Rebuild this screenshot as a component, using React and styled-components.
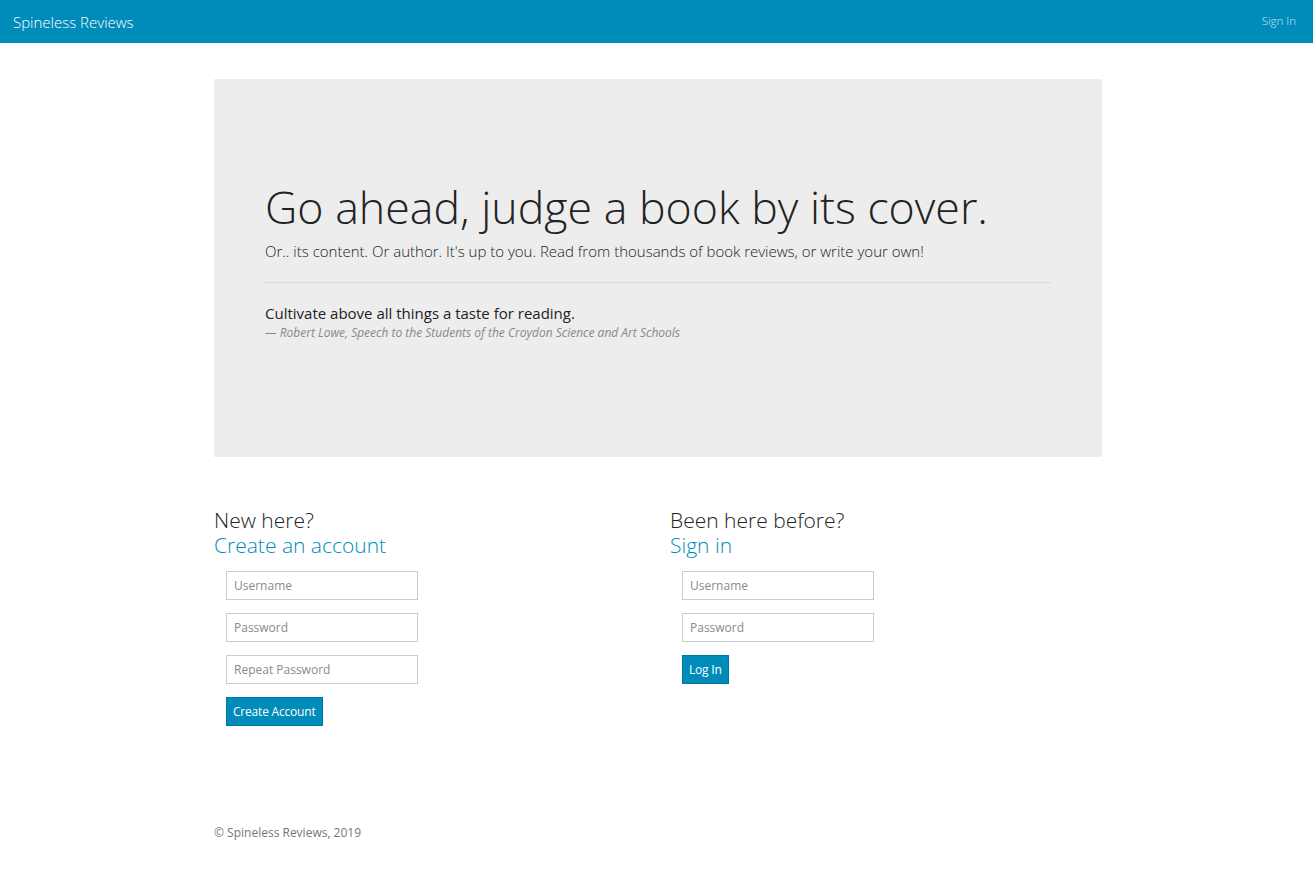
import React from 'react';
import styled, { createGlobalStyle } from 'styled-components';

const GlobalStyle = createGlobalStyle`
  html, body {
    margin: 0;
    padding: 0;
    background: #fff;
  }
  body {
    font-family: "Open Sans", "Noto Sans", "Liberation Sans", sans-serif;
    color: #222;
  }
  * {
    box-sizing: border-box;
  }
`;

const Navbar = styled.nav`
  height: 43px;
  background: #008cba;
  display: flex;
  align-items: center;
  justify-content: space-between;
  padding: 0 17px 0 13px;
`;

const Brand = styled.a`
  color: #fff;
  font-size: 15px;
  font-weight: 300;
  text-decoration: none;
  margin-top: 1px;
`;

const NavLink = styled.a`
  color: rgba(255, 255, 255, 0.8);
  font-size: 11.5px;
  font-weight: 300;
  text-decoration: none;
  margin-top: -2px;
`;

const Container = styled.main`
  width: 888px;
  margin-left: calc(50% - 442.5px);
  padding-top: 36px;
`;

const Jumbotron = styled.section`
  background: #ededed;
  height: 378px;
  padding: 103px 51px 0;
`;

const Title = styled.h1`
  margin: 0;
  font-size: 44.7px;
  font-weight: 300;
  line-height: 1.1;
  color: #222;
`;

const Lead = styled.p`
  margin: 10px 0 0;
  font-size: 15px;
  font-weight: 300;
  line-height: 1.4;
  color: #222;
`;

const Rule = styled.hr`
  border: 0;
  border-top: 1px solid #dadada;
  margin: 20px 0 20px;
`;

const Quote = styled.blockquote`
  margin: 0;
  padding: 0;
`;

const QuoteText = styled.p`
  margin: 0;
  font-size: 15px;
  line-height: 1.4;
  color: #222;
`;

const Cite = styled.footer`
  margin-top: 1px;
  font-size: 12px;
  font-style: italic;
  line-height: 1.4;
  color: #888;
`;

const Columns = styled.div`
  display: grid;
  grid-template-columns: 456px 1fr;
  padding-top: 51px;
`;

const Panel = styled.div`
  display: flex;
  flex-direction: column;
`;

const PanelTitle = styled.h3`
  margin: 0 0 13px;
  font-size: 21px;
  font-weight: 300;
  line-height: 1.2;
  color: #222;
`;

const Accent = styled.span`
  display: block;
  color: #008cba;
`;

const Form = styled.form`
  display: flex;
  flex-direction: column;
  align-items: flex-start;
  gap: 13px;
  padding-left: 12px;
`;

const Input = styled.input`
  width: 192px;
  height: 29px;
  border: 1px solid #ccc;
  border-radius: 0;
  padding: 0 7px;
  font-family: inherit;
  font-size: 12px;
  color: #222;
  outline: none;

  &::placeholder {
    color: #8a8a8a;
  }
`;

const Button = styled.button`
  height: 29px;
  padding: 0 6px;
  background: #008cba;
  border: 1px solid #0079a1;
  border-radius: 0;
  color: #fff;
  font-family: inherit;
  font-size: 12px;
  letter-spacing: -0.2px;
  cursor: pointer;
`;

const Footer = styled.footer`
  padding-top: 99px;
  font-size: 12px;
  line-height: 1.4;
  color: #777;
`;

const App = () => {
  return (
    <>
      <GlobalStyle />
      <Navbar>
        <Brand href="#">Spineless Reviews</Brand>
        <NavLink href="#">Sign In</NavLink>
      </Navbar>
      <Container>
        <Jumbotron>
          <Title>Go ahead, judge a book by its cover.</Title>
          <Lead>Or.. its content. Or author. It's up to you. Read from thousands of book reviews, or write your own!</Lead>
          <Rule />
          <Quote>
            <QuoteText>Cultivate above all things a taste for reading.</QuoteText>
            <Cite>— Robert Lowe, Speech to the Students of the Croydon Science and Art Schools</Cite>
          </Quote>
        </Jumbotron>
        <Columns>
          <Panel>
            <PanelTitle>
              New here?
              <Accent>Create an account</Accent>
            </PanelTitle>
            <Form onSubmit={(e) => e.preventDefault()}>
              <Input placeholder="Username" />
              <Input type="password" placeholder="Password" />
              <Input type="password" placeholder="Repeat Password" />
              <Button type="submit">Create Account</Button>
            </Form>
          </Panel>
          <Panel>
            <PanelTitle>
              Been here before?
              <Accent>Sign in</Accent>
            </PanelTitle>
            <Form onSubmit={(e) => e.preventDefault()}>
              <Input placeholder="Username" />
              <Input type="password" placeholder="Password" />
              <Button type="submit">Log In</Button>
            </Form>
          </Panel>
        </Columns>
        <Footer>© Spineless Reviews, 2019</Footer>
      </Container>
    </>
  );
};

export default App;
